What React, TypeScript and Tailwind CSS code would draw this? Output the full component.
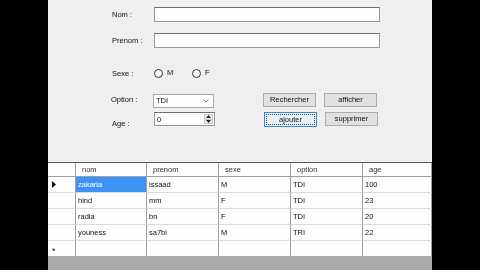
import React from "react";

const cols = "grid grid-cols-[28px_71px_72px_72px_72px_69px]";

function Btn({ label, focus }: { label: string; focus?: boolean }) {
  if (focus) {
    return (
      <div className="w-[53px] h-[15px] border border-[#3d8ad1] bg-[#e5f1fb] p-[1px] flex">
        <div className="flex-1 border border-dotted border-[#444] flex items-center justify-center">{label}</div>
      </div>
    );
  }
  return (
    <div className="w-[53px] h-[14px] border border-[#adadad] bg-[#e1e1e1] flex items-center justify-center">{label}</div>
  );
}

function Radio({ label }: { label: string }) {
  return (
    <div className="flex items-center">
      <div className="w-[9px] h-[9px] rounded-full border border-[#333] bg-white" />
      <span className="ml-[4px]">{label}</span>
    </div>
  );
}

const rows = [
  ["zakaria", "issaad", "M", "TDI", "100"],
  ["hind", "mm", "F", "TDI", "23"],
  ["radia", "bn", "F", "TDI", "20"],
  ["youness", "sa7bi", "M", "TRI", "22"],
];

export default function App() {
  return (
    <div className="w-[480px] h-[270px] bg-black flex overflow-hidden font-['Liberation_Sans',Arial,sans-serif] text-[7.5px] text-[#111] leading-none antialiased">
      <div className="ml-[48px] w-[384px] h-full flex flex-col opacity-[0.999] will-change-transform">
        <div className="h-[162px] bg-[#f0f0f0] pl-[64px] pt-[7px] flex flex-col">
          <div className="flex items-center h-[15px]">
            <div className="w-[42px]">Nom :</div>
            <div className="w-[226px] h-[15px] bg-white border border-[#9a9a9a] border-t-[#707070]" />
          </div>
          <div className="flex items-center h-[15px] mt-[11px]">
            <div className="w-[42px]">Prenom :</div>
            <div className="w-[226px] h-[15px] bg-white border border-[#9a9a9a] border-t-[#707070]" />
          </div>
          <div className="flex items-center h-[14px] mt-[18px]">
            <div className="w-[42px] pt-[2px]">Sexe :</div>
            <div className="w-[38px]">
              <Radio label="M" />
            </div>
            <Radio label="F" />
          </div>
          <div className="flex items-center h-[15px] mt-[12px]">
            <div className="w-[42px] -ml-[1px]">Option :</div>
            <div className="w-[61px] h-[14px] mt-[2px] bg-white border border-[#acacac] flex items-center pl-[2px] pr-[4px] justify-between">
              <span>TDI</span>
              <svg width="6" height="4" viewBox="0 0 6 4">
                <path d="M0.5 0.5 L3 3 L5.5 0.5" fill="none" stroke="#606060" strokeWidth="0.8" />
              </svg>
            </div>
            <div className="ml-[49px] flex gap-[8px]">
              <Btn label="Rechercher" />
              <Btn label="afficher" />
            </div>
          </div>
          <div className="flex items-start h-[15px] mt-[5px]">
            <div className="w-[42px] mt-[8px]">Age :</div>
            <div className="w-[61px] h-[14px] bg-white border border-[#9a9a9a] border-t-[#707070] flex items-stretch">
              <div className="flex-1 pl-[2px] pt-[3px]">0</div>
              <div className="w-[9px] my-[1px] mr-[1px] flex flex-col border border-[#c8c8c8] bg-[#f0f0f0]">
                <div className="flex-1 flex items-center justify-center border-b border-[#c8c8c8]">
                  <svg width="5" height="3" viewBox="0 0 5 3"><path d="M0 3 L2.5 0 L5 3 Z" fill="#222" /></svg>
                </div>
                <div className="flex-1 flex items-center justify-center">
                  <svg width="5" height="3" viewBox="0 0 5 3"><path d="M0 0 L2.5 3 L5 0 Z" fill="#222" /></svg>
                </div>
              </div>
            </div>
            <div className="ml-[49px] flex gap-[8px] items-start">
              <Btn label="ajouter" focus />
              <Btn label="supprimer" />
            </div>
          </div>
        </div>
        <div className="h-[1px] bg-[#5a5a5a]" />
        <div className="bg-white">
          <div className={`${cols} h-[14px] border-b border-[#a0a0a0] text-[#333]`}>
            <div className="border-r border-[#a0a0a0]" />
            {["nom", "prenom", "sexe", "option", "age"].map((h) => (
              <div key={h} className="border-r border-[#a0a0a0] pl-[6px] flex items-center">{h}</div>
            ))}
          </div>
          {rows.map((r, i) => (
            <div key={i} className={`${cols} h-[16px]`}>
              <div className="border-r border-[#a0a0a0] border-b border-b-[#dcdcdc] flex items-center pl-[4px]">
                {i === 0 && (
                  <svg width="4" height="7" viewBox="0 0 4 7"><path d="M0 0 L4 3.5 L0 7 Z" fill="#111" /></svg>
                )}
              </div>
              {r.map((c, j) => (
                <div
                  key={j}
                  className={`border-r border-[#a0a0a0] border-b border-b-[#dcdcdc] flex items-center pl-[2px] ${
                    i === 0 && j === 0 ? "bg-[#3d94f6] text-white" : ""
                  }`}
                >
                  {c}
                </div>
              ))}
            </div>
          ))}
          <div className={`${cols} h-[15px]`}>
            <div className="border-r border-[#a0a0a0] flex items-center pl-[4px] pt-[5px] text-[9px]">*</div>
            {[0, 1, 2, 3, 4].map((j) => (
              <div key={j} className="border-r border-[#a0a0a0]" />
            ))}
          </div>
        </div>
        <div className="flex-1 bg-[#ababab]" />
      </div>
    </div>
  );
}
